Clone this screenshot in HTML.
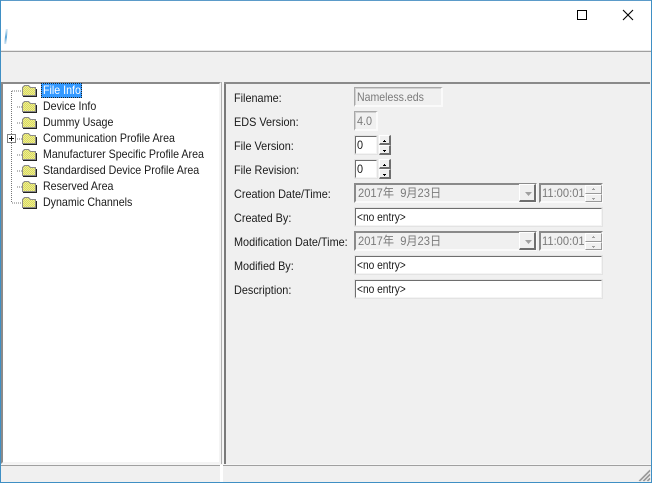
<!DOCTYPE html>
<html><head><meta charset="utf-8">
<style>
html,body{margin:0;padding:0;background:#f0f0f0}
#w{position:relative;width:652px;height:483px;overflow:hidden;background:#f0f0f0;font:12px "Liberation Sans","Noto Sans CJK JP",sans-serif;color:#1a1a1a}
#w div{position:absolute;box-sizing:border-box}
.t{white-space:nowrap;line-height:14px;height:14px;transform-origin:0 50%;transform:scaleX(.905)}
.n{transform:scaleX(.887)}
.e{transform:scaleX(.85)}
.g{color:#7a7a7a}
.in{background:#fff;border-top:2px solid #6e6e6e;border-left:2px solid #6e6e6e;border-right:2px solid #f4f4f4;border-bottom:2px solid #f4f4f4;outline:1px solid #e3e3e3;outline-offset:-1px}
.dis{background:#f0f0f0;border:2px solid #8a8a8a;border-right-color:#fafafa;border-bottom-color:#fafafa}
.ds{border-top-color:#a8a8a8;border-left-color:#a8a8a8;border-width:1px 2px 2px 1px;box-shadow:inset 1px 1px 0 #d0d0d0}
.btn{background:#f0f0f0;border-top:1px solid #fff;border-left:1px solid #fff;border-right:2px solid #6e6e6e;border-bottom:2px solid #6e6e6e}
.sb{border-right:1px solid #999;border-bottom:1px solid #999}
</style></head><body>
<div id="w">
<div style="left:0;top:0;width:652px;height:51px;background:#fff"></div>
<div style="left:0;top:0;width:652px;height:1px;background:#5b9bc9"></div>
<div style="left:0;top:50px;width:652px;height:1px;background:#e8e8e8"></div>
<div style="left:0;top:51px;width:652px;height:1px;background:#a0a0a0"></div>
<div style="left:5px;top:29px;width:2px;height:15px;background:linear-gradient(#d5e8f5,#5aa5d8 55%,#cfe3f2);transform:skewX(-6deg)"></div>
<svg style="position:absolute;left:0;top:0" width="652" height="30"><rect x="577.5" y="10.5" width="9" height="9" fill="none" stroke="#000"/><path d="M623 10l10 10M633 10l-10 10" stroke="#000" stroke-width="1.1" fill="none"/></svg>

<!-- tree pane -->
<div style="left:1px;top:82px;width:220px;height:382px;background:#fff;border-top:2px solid #8a8a8a;border-left:2px solid #8a8a8a;border-right:2px solid #f4f4f4;border-bottom:2px solid #f4f4f4"></div>
<div style="left:221px;top:82px;width:1px;height:382px;background:#b0b0b0"></div>
<div style="left:222px;top:82px;width:2px;height:382px;background:#f6f6f6"></div>
<div style="left:224px;top:82px;width:2px;height:382px;background:#7a7a7a"></div>
<div style="left:224px;top:82px;width:426px;height:2px;background:#8a8a8a"></div>

<svg style="position:absolute;left:0;top:80px" width="50" height="130">
<path d="M11.500 11V123M12 11H22M17 27H22M17 43H22M17 59H22M17 75H22M17 91H22M17 107H22M12 123H22" stroke="#777" stroke-dasharray="1 1" fill="none"/>
<rect x="7.500" y="54.500" width="8" height="8" fill="#fff" stroke="#808080"/>
<path d="M9 58.500H14M11.500 56V61" stroke="#000" fill="none"/>
<defs><pattern id="d" width="2" height="2" patternUnits="userSpaceOnUse"><rect width="2" height="2" fill="#eeee90"/><rect width="1" height="1" fill="#d8d860"/><rect x="1" y="1" width="1" height="1" fill="#d8d860"/></pattern>
<g id="fo"><path d="M22.500 15.500V7.500L24.500 5.500H28.500L30.500 7.500H35.500V15.500Z" fill="url(#d)" stroke="#8a8a8a"/><path d="M23 16.500H36.500V9" stroke="#222" fill="none"/></g></defs>
<use href="#fo"/><use href="#fo" y="16"/><use href="#fo" y="32"/><use href="#fo" y="48"/><use href="#fo" y="64"/><use href="#fo" y="80"/><use href="#fo" y="96"/><use href="#fo" y="112"/>
</svg>

<div style="left:41px;top:83px;width:41px;height:15px;background:#3399ff;outline:1px dotted #222;outline-offset:-1px"></div>
<div class="t n" style="left:43px;top:83px;color:#fff">File Info</div>
<div class="t n" style="left:43px;top:99px">Device Info</div>
<div class="t n" style="left:43px;top:115px">Dummy Usage</div>
<div class="t n" style="left:43px;top:131px">Communication Profile Area</div>
<div class="t n" style="left:43px;top:147px">Manufacturer Specific Profile Area</div>
<div class="t n" style="left:43px;top:163px">Standardised Device Profile Area</div>
<div class="t n" style="left:43px;top:179px">Reserved Area</div>
<div class="t n" style="left:43px;top:195px">Dynamic Channels</div>

<!-- labels -->
<div class="t" style="left:234px;top:91px">Filename:</div>
<div class="t" style="left:234px;top:115px">EDS Version:</div>
<div class="t" style="left:234px;top:139px">File Version:</div>
<div class="t" style="left:234px;top:163px">File Revision:</div>
<div class="t" style="left:234px;top:187px">Creation Date/Time:</div>
<div class="t" style="left:234px;top:211px">Created By:</div>
<div class="t" style="left:234px;top:235px">Modification Date/Time:</div>
<div class="t" style="left:234px;top:259px">Modified By:</div>
<div class="t" style="left:234px;top:283px">Description:</div>

<!-- fields -->
<div class="dis ds" style="left:354px;top:87px;width:89px;height:20px"></div>
<div class="t g" style="left:357px;top:90px;transform:scaleX(.88)">Nameless.eds</div>
<div class="dis ds" style="left:354px;top:111px;width:24px;height:20px"></div>
<div class="t g" style="left:357px;top:114px">4.0</div>

<div class="in" style="left:354px;top:135px;width:24px;height:20px"></div>
<div class="t" style="left:357px;top:138px">0</div>
<div class="btn" style="left:379px;top:135px;width:12px;height:10px"></div>
<div class="btn" style="left:379px;top:145px;width:12px;height:10px"></div>
<div class="in" style="left:354px;top:159px;width:24px;height:20px"></div>
<div class="t" style="left:357px;top:162px">0</div>
<div class="btn" style="left:379px;top:159px;width:12px;height:10px"></div>
<div class="btn" style="left:379px;top:169px;width:12px;height:10px"></div>
<svg style="position:absolute;left:379px;top:135px" width="12" height="44"><path d="M4 6h3M5 5h1M4 15h3M5 16h1M4 30h3M5 29h1M4 39h3M5 40h1" stroke="#000" fill="none" transform="translate(0,.5)"/></svg>

<div class="dis" style="left:354px;top:183px;width:183px;height:20px"></div>
<div class="t g" style="left:358px;top:186px;transform:scaleX(.93)">2017年&nbsp; 9月23日</div>
<div class="btn" style="left:519px;top:184px;width:17px;height:18px"></div>
<div class="dis" style="left:539px;top:183px;width:64px;height:20px"></div>
<div class="t g" style="left:542px;top:186px;transform:scaleX(.93)">11:00:01</div>
<div class="btn sb" style="left:585px;top:185px;width:17px;height:9px"></div>
<div class="btn sb" style="left:585px;top:194px;width:17px;height:8px"></div>

<div class="in" style="left:354px;top:207px;width:249px;height:20px"></div>
<div class="t e" style="left:357px;top:210px">&lt;no entry&gt;</div>

<div class="dis" style="left:354px;top:231px;width:183px;height:20px"></div>
<div class="t g" style="left:358px;top:234px;transform:scaleX(.93)">2017年&nbsp; 9月23日</div>
<div class="btn" style="left:519px;top:232px;width:17px;height:18px"></div>
<div class="dis" style="left:539px;top:231px;width:64px;height:20px"></div>
<div class="t g" style="left:542px;top:234px;transform:scaleX(.93)">11:00:01</div>
<div class="btn sb" style="left:585px;top:233px;width:17px;height:9px"></div>
<div class="btn sb" style="left:585px;top:242px;width:17px;height:8px"></div>

<svg style="position:absolute;left:519px;top:183px" width="84" height="68"><path d="M6 9h7l-3.500 4zM6 57h7l-3.500 4z" fill="#a0a0a0"/><path d="M73 6.500h3M74 5.500h1M73 15.500h3M74 16.500h1M73 54.500h3M74 53.500h1M73 63.500h3M74 64.500h1" stroke="#a0a0a0" fill="none"/></svg>

<div class="in" style="left:354px;top:255px;width:249px;height:20px"></div>
<div class="t e" style="left:357px;top:258px">&lt;no entry&gt;</div>
<div class="in" style="left:354px;top:279px;width:249px;height:20px"></div>
<div class="t e" style="left:357px;top:282px">&lt;no entry&gt;</div>

<!-- status -->
<div style="left:0;top:464px;width:652px;height:1px;background:#f6f6f6"></div>
<div style="left:0;top:465px;width:220px;height:1px;background:#a0a0a0"></div>
<div style="left:223px;top:465px;width:429px;height:1px;background:#a0a0a0"></div>
<div style="left:220px;top:465px;width:3px;height:17px;background:#fff"></div>
<svg style="position:absolute;left:638px;top:469px" width="13" height="13"><path d="M1 12L12 1M2 12L12 2M5 12L12 5M6 12L12 6M9 12L12 9M10 12L12 10" stroke="#9a9a9a" fill="none"/></svg>

<!-- window borders -->
<div style="left:0;top:0;width:1px;height:483px;background:#3f8fc4"></div>
<div style="left:651px;top:0;width:1px;height:483px;background:#3f8fc4"></div>
<div style="left:0;top:482px;width:652px;height:1px;background:#3f8fc4"></div>
</div>
</body></html>
